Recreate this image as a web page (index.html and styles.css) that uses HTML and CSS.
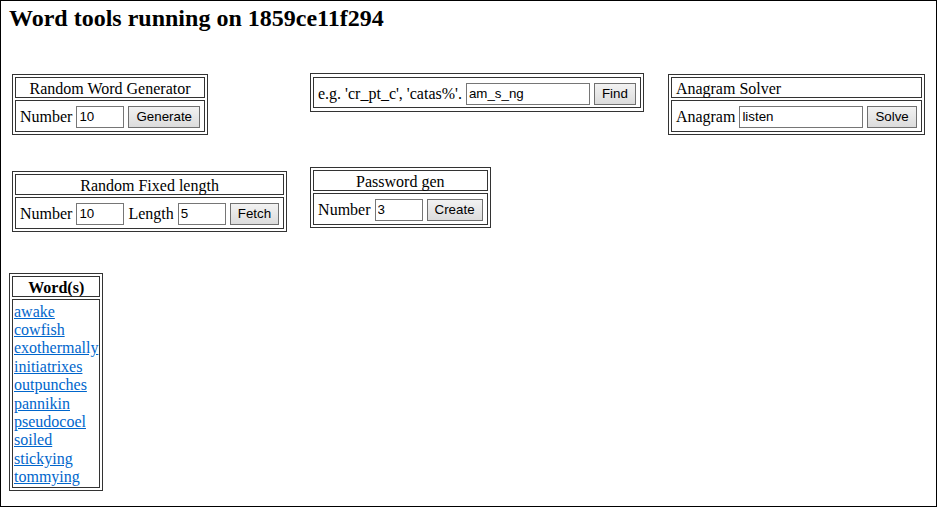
FILE: index.html
```html
<!DOCTYPE html>
<html>
<head>
<meta charset="utf-8">
<title>Word tools</title>
<link rel="stylesheet" href="styles.css">
</head>
<body>
<div class="page">
  <h2 class="title">Word tools running on 1859ce11f294</h2>

  <div class="row row1">
    <table class="box gen">
      <tr><td class="head center">Random Word Generator</td></tr>
      <tr><td class="form">Number <input class="num" type="text" value="10"> <button>Generate</button></td></tr>
    </table>
    <table class="box find">
      <tr><td class="form findcell">e.g. 'cr_pt_c', 'catas%'. <input class="wide" type="text" value="am_s_ng"> <button>Find</button></td></tr>
    </table>
    <table class="box anagram">
      <tr><td class="head">Anagram Solver</td></tr>
      <tr><td class="form">Anagram <input class="wide" type="text" value="listen"> <button>Solve</button></td></tr>
    </table>
  </div>

  <div class="row row2">
    <table class="box fixed">
      <tr><td class="head center">Random Fixed length</td></tr>
      <tr><td class="form">Number <input class="num" type="text" value="10"> Length <input class="num" type="text" value="5"> <button>Fetch</button></td></tr>
    </table>
    <table class="box pass">
      <tr><td class="head center">Password gen</td></tr>
      <tr><td class="form">Number <input class="num" type="text" value="3"> <button>Create</button></td></tr>
    </table>
  </div>

  <div class="row row3">
    <table class="box words">
      <tr><th class="head">Word(s)</th></tr>
      <tr><td class="list">
        <a href="#">awake</a><br>
        <a href="#">cowfish</a><br>
        <a href="#">exothermally</a><br>
        <a href="#">initiatrixes</a><br>
        <a href="#">outpunches</a><br>
        <a href="#">pannikin</a><br>
        <a href="#">pseudocoel</a><br>
        <a href="#">soiled</a><br>
        <a href="#">stickying</a><br>
        <a href="#">tommying</a>
      </td></tr>
    </table>
  </div>
</div>
</body>
</html>
```

FILE: styles.css
```css
html, body {
  margin: 0;
  padding: 0;
  background: #fff;
}

body {
  font-family: "Liberation Serif", "Times New Roman", serif;
  font-size: 16px;
  line-height: 1.15;
  color: #000;
}

.page {
  width: 927px;
  height: 501px;
  border: 1px solid #000;
  padding: 4px 0 0 8px;
}

.title {
  margin: 0;
  font-size: 24px;
  font-weight: bold;
  line-height: 1.15;
}

.row {
  display: flex;
  align-items: flex-start;
}

.row1 { margin-top: 40px; }
.row2 { margin-top: 32px; }
.row3 { margin-top: 41px; }

.box {
  border: 1px solid #333;
  border-spacing: 2px;
  border-collapse: separate;
  font-size: 16px;
}

.box td,
.box th {
  border: 1px solid #333;
  padding: 1px 4px;
  white-space: nowrap;
}

.box .head {
  padding: 2px 4px 0;
  height: 19px;
  box-sizing: border-box;
  line-height: 17px;
}

.box th {
  font-weight: bold;
  text-align: center;
}

.center { text-align: center; }

.box .form {
  padding: 5px 4px 3px;
  line-height: 22px;
}

.box .findcell {
  padding: 5px 4px 2px;
}

.find { border-spacing: 2px 3px; }

.gen { margin: 1px 0 0 3px; }
.find { margin-left: 102px; }
.anagram { margin: 1px 0 0 24px; }

.fixed { margin: 4px 0 0 3px; }
.pass { margin-left: 23px; }

input {
  box-sizing: border-box;
  height: 22px;
  border: 1px solid #767676;
  padding: 1px 2px;
  font-family: "Liberation Sans", Arial, sans-serif;
  font-size: 13.33px;
  color: #000;
  vertical-align: top;
  margin: 0;
  line-height: normal;
}

.num { width: 48px; }
.wide { width: 124px; }

button {
  box-sizing: border-box;
  height: 22px;
  border: 1px solid #707070;
  background: linear-gradient(#f2f2f2, #dcdcdc);
  font-family: "Liberation Sans", Arial, sans-serif;
  font-size: 13.33px;
  color: #000;
  padding: 0 7px;
  vertical-align: top;
  margin: 0;
  line-height: normal;
}

.box .list {
  padding: 3px 1px 0;
}

.list a {
  color: #0066cc;
  text-decoration: underline;
}
```
